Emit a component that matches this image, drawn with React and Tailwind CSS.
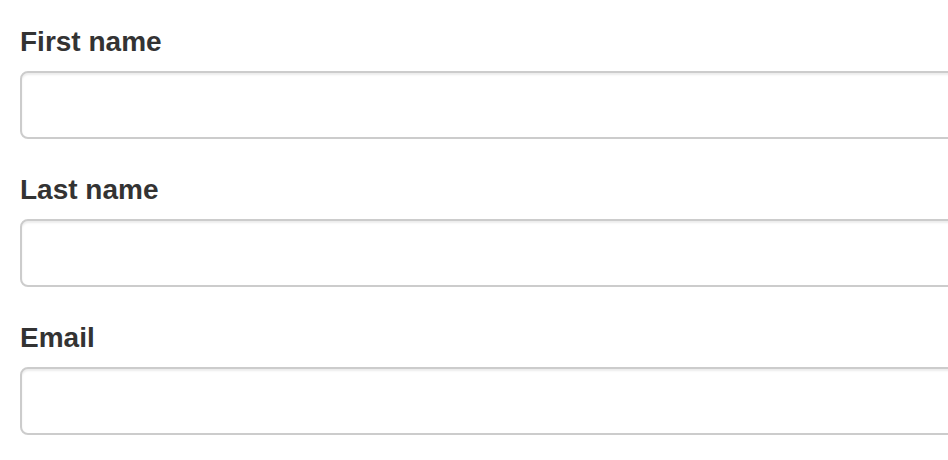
export default function App() {
  const fields = ["First name", "Last name", "Email"];
  return (
    <div className="w-[948px] h-[460px] overflow-hidden bg-white pl-[20px] pt-[21px] font-['Liberation_Sans',Arial,sans-serif] text-[#333]">
      <div className="w-[1000px] flex flex-col gap-[30px]">
        {fields.map((f) => (
          <div key={f} className="flex flex-col">
            <label className="block text-[28px] leading-[40px] font-bold pt-[1px] mb-[9px]">{f}</label>
            <input
              type="text"
              className="block w-full h-[68px] rounded-[8px] border-2 border-[#ccc] bg-white shadow-[inset_0_2px_2px_rgba(0,0,0,0.075)] outline-none px-[24px] text-[28px]"
            />
          </div>
        ))}
      </div>
    </div>
  );
}
